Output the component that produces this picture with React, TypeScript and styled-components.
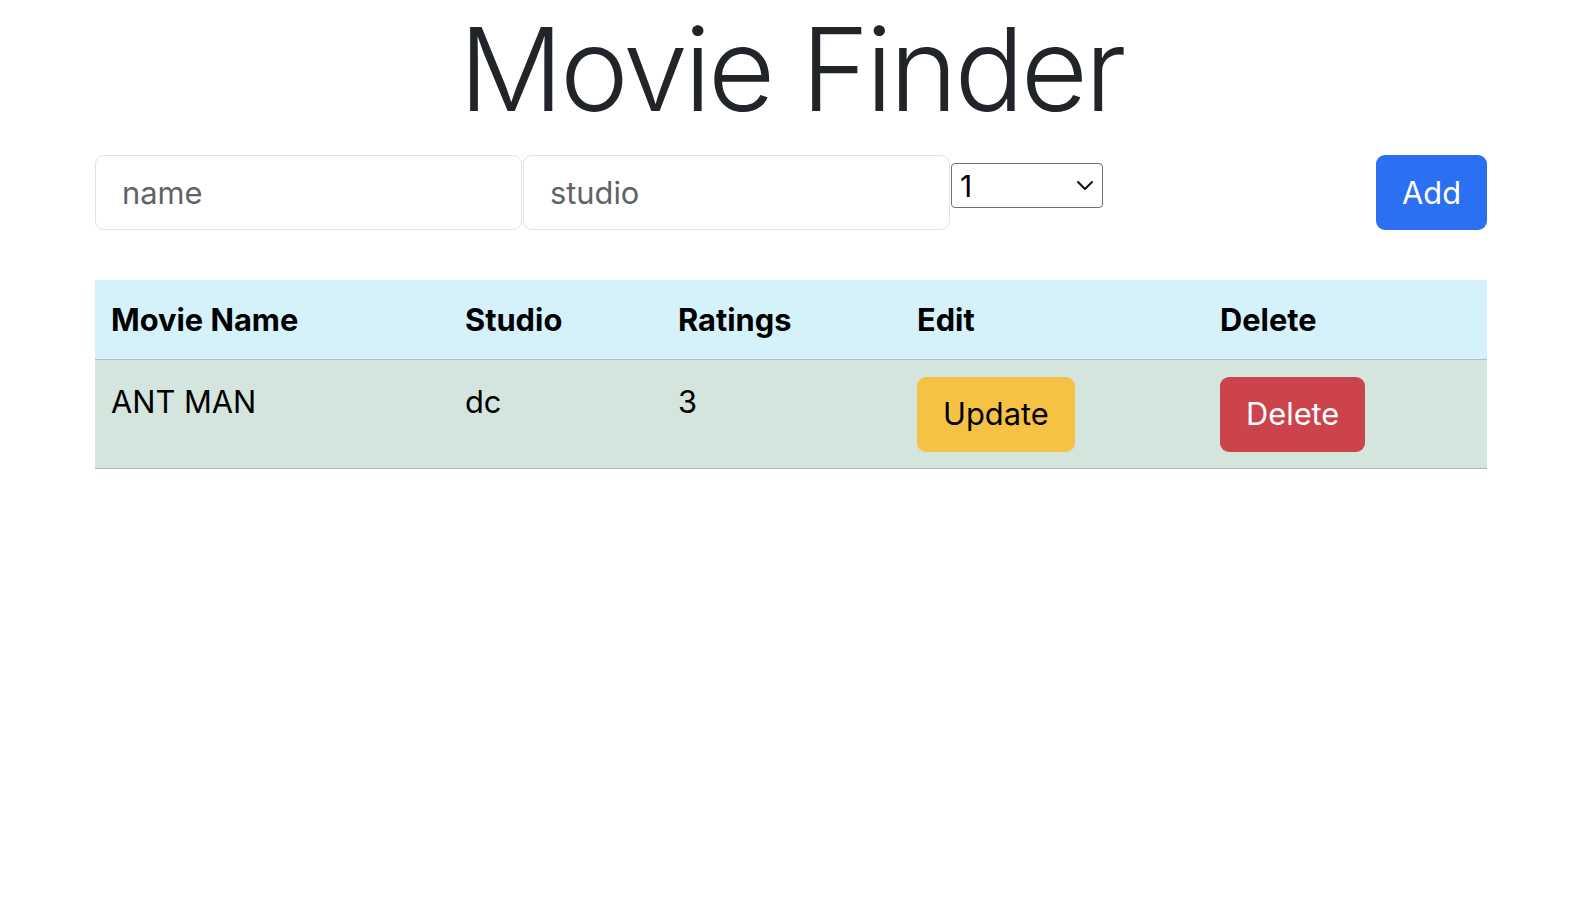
import { useState } from 'react';
import styled, { createGlobalStyle } from 'styled-components';

interface Movie {
  id: number;
  name: string;
  studio: string;
  rating: number;
}

const GlobalStyle = createGlobalStyle`
  body {
    margin: 0;
    background: #fff;
    color: #212529;
    font-family: Inter, "Noto Sans", sans-serif;
    font-size: 30.8px;
    line-height: 1.5;
  }
  * { box-sizing: border-box; }
`;

const Page = styled.div`
  width: 1392px;
  margin-left: 95px;
`;

const Title = styled.h1`
  margin: 0 0 16px;
  text-align: center;
  font-size: 116px;
  font-weight: 300;
  line-height: 1.2;
  letter-spacing: -3.4px;
  color: #212529;
`;

const Form = styled.form`
  display: flex;
  align-items: flex-start;
  gap: 1px;
  margin-bottom: 49.5px;
`;

const Input = styled.input`
  width: 427px;
  height: 75px;
  padding: 0 26px;
  border: 1.5px solid #dee2e6;
  border-radius: 9px;
  font: inherit;
  color: #212529;
  &::placeholder { color: #5f6367; }
  &:focus { outline: none; }
`;

const SelectWrap = styled.div`
  position: relative;
  margin-top: 7.5px;
  width: 152px;
  height: 45px;
`;

const Select = styled.select`
  appearance: none;
  width: 100%;
  height: 100%;
  padding: 0 0 0 8px;
  font-family: Inter, "Noto Sans", sans-serif;
  font-size: 30px;
  color: #000;
  border: 1.5px solid #6f6f6f;
  border-radius: 4px;
  background: #fff;
  &:focus { outline: none; }
`;

const Chevron = styled.svg`
  position: absolute;
  right: 9px;
  top: 17px;
  pointer-events: none;
`;

const Button = styled.button<{ $tone: 'primary' | 'warning' | 'danger' }>`
  height: 75px;
  padding: 0 26px;
  border: none;
  border-radius: 9px;
  font: inherit;
  cursor: pointer;
  color: ${p => (p.$tone === 'warning' ? '#000' : '#fff')};
  background: ${p =>
    p.$tone === 'primary' ? '#2b6ff2' : p.$tone === 'warning' ? '#f6c244' : '#cc444b'};
`;

const AddButton = styled(Button)`
  margin-left: auto;
`;

const Table = styled.table`
  width: 100%;
  border-collapse: collapse;
  table-layout: fixed;
  color: #000;
`;

const HeadCell = styled.th<{ $w: number }>`
  width: ${p => p.$w}px;
  text-align: left;
  font-weight: 700;
  padding: 17px 16px 16.2px;
  background: #d5f1fa;
  border-bottom: 1.5px solid #a8c2ca;
`;

const Cell = styled.td`
  padding: 16.6px 16px;
  vertical-align: top;
  background: #d4e5dd;
  border-bottom: 1.5px solid #a8b8b1;
`;

const TextCell = styled(Cell)`
  padding-top: 18.5px;
`;

const columns = [
  { label: 'Movie Name', w: 354 },
  { label: 'Studio', w: 213 },
  { label: 'Ratings', w: 239 },
  { label: 'Edit', w: 303 },
  { label: 'Delete', w: 283 },
];

export default function App() {
  const [movies] = useState<Movie[]>([{ id: 1, name: 'ANT MAN', studio: 'dc', rating: 3 }]);

  return (
    <>
      <GlobalStyle />
      <Page>
        <Title>Movie Finder</Title>
        <Form onSubmit={e => e.preventDefault()}>
          <Input placeholder="name" />
          <Input placeholder="studio" />
          <SelectWrap>
            <Select defaultValue="1">
              {[1, 2, 3, 4, 5].map(n => (
                <option key={n} value={n}>{n}</option>
              ))}
            </Select>
            <Chevron width="18" height="11" viewBox="0 0 18 11">
              <path d="M2 2l7 7 7-7" fill="none" stroke="#111" strokeWidth="2" strokeLinecap="round" strokeLinejoin="round" />
            </Chevron>
          </SelectWrap>
          <AddButton type="submit" $tone="primary">Add</AddButton>
        </Form>
        <Table>
          <thead>
            <tr>
              {columns.map(c => (
                <HeadCell key={c.label} $w={c.w}>{c.label}</HeadCell>
              ))}
            </tr>
          </thead>
          <tbody>
            {movies.map(m => (
              <tr key={m.id}>
                <TextCell>{m.name}</TextCell>
                <TextCell>{m.studio}</TextCell>
                <TextCell>{m.rating}</TextCell>
                <Cell><Button $tone="warning">Update</Button></Cell>
                <Cell><Button $tone="danger">Delete</Button></Cell>
              </tr>
            ))}
          </tbody>
        </Table>
      </Page>
    </>
  );
}
